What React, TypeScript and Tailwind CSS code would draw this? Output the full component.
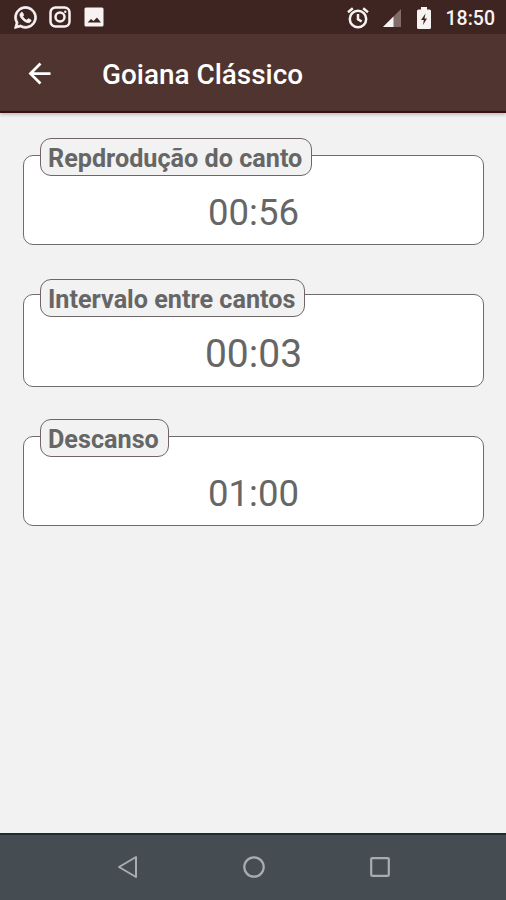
import { FaWhatsapp } from "react-icons/fa";
import { MdArrowBack } from "react-icons/md";
import clsx from "clsx";

const timers = [
  {
    label: "Repdrodução do canto",
    value: "00:56",
    box: "mt-[42px] h-[90px]",
    tag: "-mt-[18px] w-[272px]",
    time: "mt-[12px] text-[36.5px]",
  },
  {
    label: "Intervalo entre cantos",
    value: "00:03",
    box: "mt-[49px] h-[93px]",
    tag: "-mt-[16px] w-[265px]",
    time: "mt-[12px] text-[39px]",
  },
  {
    label: "Descanso",
    value: "01:00",
    box: "mt-[49px] h-[90px]",
    tag: "-mt-[18px] w-[129px]",
    time: "mt-[12px] text-[36.5px]",
  },
];

function StatusBar() {
  return (
    <div className="flex h-[34px] items-center bg-[#3f2521] pr-[11px] pl-[13px] text-[#f7f3f2]">
      <FaWhatsapp className="size-[25px]" stroke="currentColor" strokeWidth="18" aria-hidden="true" />
      <svg viewBox="0 0 22 22" className="ml-[11px] size-[22px]" fill="none" stroke="currentColor" strokeWidth="2.5" aria-hidden="true">
        <rect x="1.5" y="1.5" width="19" height="19" rx="5" />
        <circle cx="11" cy="11" r="4.5" />
        <circle cx="16.3" cy="5.7" r="1.2" fill="currentColor" stroke="none" />
      </svg>
      <svg viewBox="0 0 20 20" className="ml-[13px] size-[20px]" aria-hidden="true">
        <rect x="0.5" y="0.5" width="19" height="19" rx="1.5" fill="currentColor" />
        <path d="M3.500 15.500 7 12l2.500 2 3.500-3.500 4 5z" fill="#3f2521" />
      </svg>
      <svg viewBox="0 0 22 22" className="mt-px ml-auto size-[22px]" fill="none" stroke="currentColor" strokeWidth="2.5" aria-hidden="true">
        <circle cx="11" cy="12" r="8.2" />
        <path d="M11 7v5.200l3.600 2.300M1 5.200 5.800 1.300M21 5.200l-4.800-3.900" />
      </svg>
      <svg viewBox="0 0 18 18" className="mt-[2px] ml-[14px] size-[18px]" aria-hidden="true">
        <path d="M18 0v18H0z" fill="#806d6a" />
        <path d="M10.500 7.500V18H0z" fill="currentColor" />
      </svg>
      <svg viewBox="0 0 14 22" className="mt-px ml-[16px] h-[22px] w-[14px]" aria-hidden="true">
        <path d="M4 0h6v2.500h2.500q1.500 0 1.500 1.500v16.500q0 1.500-1.500 1.500h-11Q0 22 0 20.500V4q0-1.500 1.500-1.500H4z" fill="currentColor" />
        <path d="M8.500 6.500 4 13h2.800L6 18l4-6.500H7.500z" fill="#3f2521" />
      </svg>
      <span className="mt-[3px] ml-[15px] text-[19.5px] leading-none font-medium">18:50</span>
    </div>
  );
}

function AppBar() {
  return (
    <header className="relative flex h-[79px] items-center border-b-2 border-[#3b1013] bg-[#4f342f] pl-[23px] text-white shadow-[0_2px_3px_rgba(0,0,0,0.2)]">
      <button type="button" aria-label="Voltar" className="mt-px">
        <MdArrowBack className="size-[33px]" aria-hidden="true" />
      </button>
      <h1 className="mt-[5px] ml-[46px] text-[27.9px] leading-none font-medium">Goiana Clássico</h1>
    </header>
  );
}

function Timer({ label, value, box, tag, time }: (typeof timers)[number]) {
  return (
    <section
      className={clsx(
        "mr-[22px] ml-[23px] flex flex-col rounded-[10px] border border-[#706c6c] bg-white text-[#666]",
        box
      )}
    >
      <h2
        className={clsx(
          "ml-4 flex h-[38px] shrink-0 items-center rounded-[11px] border border-[#706668] bg-[#f2f2f2] pt-[4px] pl-[7px] text-[25.2px] leading-none font-bold whitespace-nowrap",
          tag
        )}
      >
        {label}
      </h2>
      <p className={clsx("text-center leading-[50px]", time)}>{value}</p>
    </section>
  );
}

function NavBar() {
  return (
    <nav className="mt-auto flex h-[67px] items-center justify-between border-t-2 border-[#1b2d2d] bg-[#454c52] px-[116px] pb-[2px] text-[#a8adaf]">
      <svg viewBox="0 0 22 24" className="h-[24px] w-[22px]" fill="none" stroke="currentColor" strokeWidth="2" strokeLinejoin="round" aria-hidden="true">
        <path d="M20 2v20L3 12z" />
      </svg>
      <svg viewBox="0 0 24 24" className="size-[24px]" fill="none" stroke="currentColor" strokeWidth="2.2" aria-hidden="true">
        <circle cx="12" cy="12" r="9.7" />
      </svg>
      <svg viewBox="0 0 20 20" className="size-[20px]" fill="none" stroke="currentColor" strokeWidth="2.2" aria-hidden="true">
        <rect x="1.2" y="1.2" width="17.6" height="17.6" rx="1" />
      </svg>
    </nav>
  );
}

export default function App() {
  return (
    <div className="flex h-[900px] w-[506px] flex-col bg-[#f2f2f2] font-[Roboto,sans-serif]">
      <StatusBar />
      <AppBar />
      <main>
        {timers.map((timer) => (
          <Timer key={timer.label} {...timer} />
        ))}
      </main>
      <NavBar />
    </div>
  );
}
